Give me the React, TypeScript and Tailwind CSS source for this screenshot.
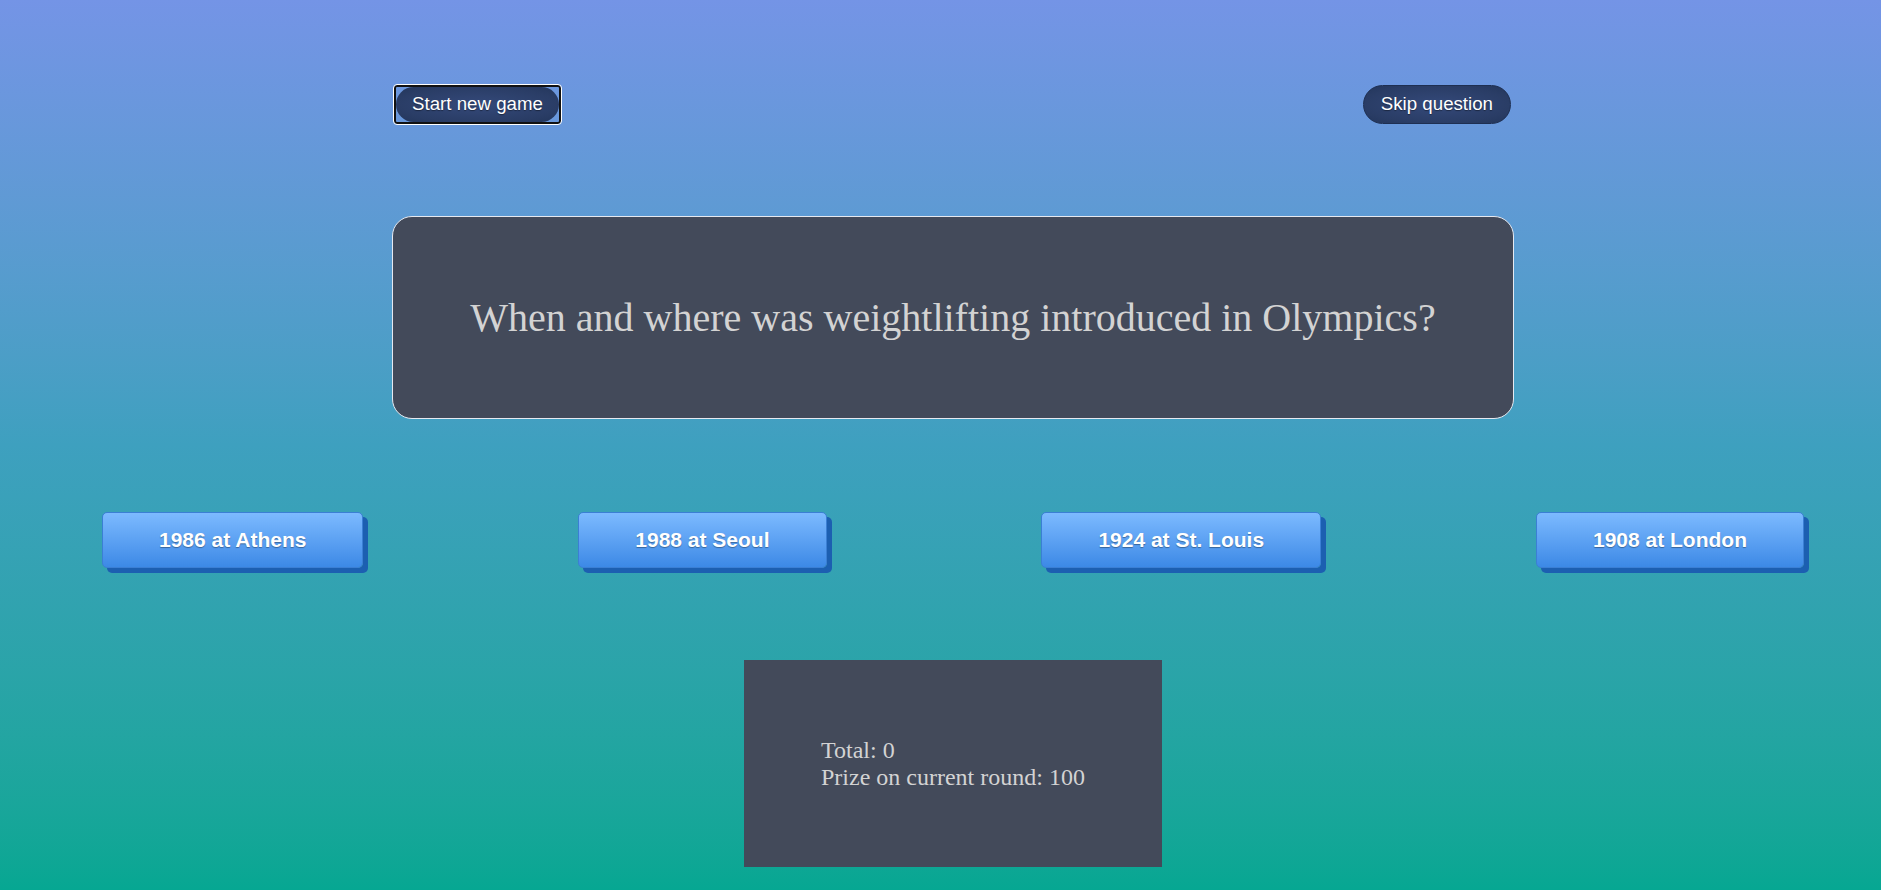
import React from "react";

type Answer = { label: string };

const answers: Answer[] = [
  { label: "1986 at Athens" },
  { label: "1988 at Seoul" },
  { label: "1924 at St. Louis" },
  { label: "1908 at London" },
];

const pill =
  "flex items-center rounded-full bg-[radial-gradient(ellipse_at_center,#34497a_0%,#2a3d66_70%,#23365b_100%)] text-white text-[18.7px] font-['Liberation_Sans',Arial,sans-serif] [text-shadow:0_1px_1px_rgba(0,0,0,0.4)]";

const AnswerButton = ({ label }: Answer) => (
  <button className="h-[56px] rounded-[5px] border border-[#3b7fd4] bg-gradient-to-b from-[#7cbaff] to-[#3c89e6] px-[56px] text-[21px] font-bold text-white font-['Liberation_Sans',Arial,sans-serif] shadow-[5px_5px_0_#1c5fb1] [text-shadow:0_1px_1px_rgba(0,0,0,0.35)]">
    {label}
  </button>
);

export default function App() {
  return (
    <div className="flex h-[890px] w-full flex-col bg-gradient-to-b from-[#7494e6] via-[#3ea0bf] to-[#06a792]">
      <div className="flex justify-center pl-[25px] pt-[84px]">
        <div className="flex w-[1122px] flex-col">
          {/* top controls */}
          <div className="flex h-[41px] items-center justify-between">
            <div className="ml-[2px] flex rounded-[3px] border-2 border-[#111] outline outline-1 outline-white">
              <button className={`${pill} h-[35px] px-[16px]`}>Start new game</button>
            </div>
            <button className={`${pill} mr-[3px] h-[39px] border border-[#1e2f52] px-[17px]`}>
              Skip question
            </button>
          </div>

          {/* question */}
          <div className="mt-[91px] flex h-[203px] items-center justify-center rounded-[20px] border border-[#e6e9f0] bg-[#434a5a]">
            <p className="text-[40px] text-[#d3d3d3] font-['Liberation_Serif','Times_New_Roman',serif]">
              When and where was weightlifting introduced in Olympics?
            </p>
          </div>
        </div>
      </div>

      {/* answers */}
      <div className="mt-[93px] flex justify-between pl-[102px] pr-[77px]">
        {answers.map((a) => (
          <AnswerButton key={a.label} label={a.label} />
        ))}
      </div>

      {/* score */}
      <div className="mt-[92px] flex justify-center pl-[25px]">
        <div className="flex h-[207px] w-[418px] flex-col justify-center bg-[#434a5a] pl-[77px] text-[24px] leading-[27px] text-[#d3d3d3] font-['Liberation_Serif','Times_New_Roman',serif]">
          <span>Total: 0</span>
          <span>Prize on current round: 100</span>
        </div>
      </div>
    </div>
  );
}
